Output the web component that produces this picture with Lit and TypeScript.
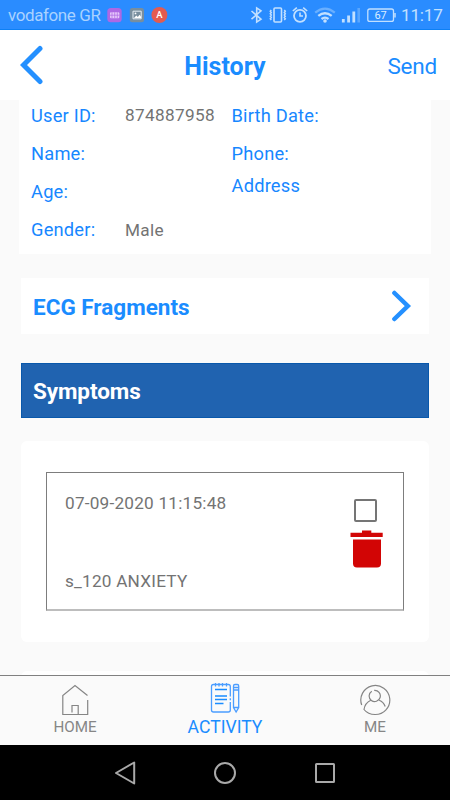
import { LitElement, html, css } from "lit";
import { customElement } from "lit/decorators.js";

@customElement("app-root")
export class AppRoot extends LitElement {
  static styles = css`
    :host { display: flex; flex-direction: column; width: 450px; height: 800px; overflow: hidden; background: #fafafa; font-family: Roboto, sans-serif; color: #737373; }
    * { box-sizing: border-box; }
    svg { display: block; flex: none; }
    .status { display: flex; align-items: center; height: 30px; flex: none; background: #2a8cff; border-bottom: 1px solid #0d80f5; color: #b9dbff; padding: 1px 8px 0 8px; }
    .carrier { font-size: 17px; width: 99px; white-space: nowrap; color: #a9d2ff; letter-spacing: -0.4px; }
    .icons { margin-right: auto; }
    .time { font-size: 17.2px; width: 41px; margin-left: 5px; white-space: nowrap; color: #c2e0ff; letter-spacing: -0.25px; }
    .header { display: grid; grid-template-columns: 100px 1fr 100px; align-items: center; height: 70px; flex: none; background: #fff; color: #1a8cff; padding: 3px 13px 0 20px; }
    .title { font-size: 25px; font-weight: 700; text-align: center; padding-right: 7px; }
    .send { font-size: 22.5px; text-align: right; letter-spacing: -0.2px; margin-top: -2px; }
    .back { margin-top: -3px; }
    .content { flex: 1; min-height: 0; overflow: hidden; }
    .user { display: flex; height: 154px; margin: 0 19px; background: #fff; padding-left: 12px; overflow: hidden; }
    .col { margin-top: -3.5px; }
    .labels { width: 94px; }
    .values { width: 106.5px; margin-top: -4px; }
    .cell { height: 38.2px; line-height: 38.2px; font-size: 18.3px; white-space: nowrap; letter-spacing: 0.2px; }
    .label { color: #1787ff; }
    .value { font-size: 17.2px; letter-spacing: 0.35px; }
    .tight { height: 26px; line-height: 26px; }
    .section { display: flex; align-items: center; justify-content: space-between; height: 56px; margin: 24px 21px 0; padding: 2px 17px 0 12px; background: #fff; color: #1a8cff; font-size: 22.5px; font-weight: 700; }
    .section svg { margin-top: -2px; }
    .active { margin-top: 28.5px; height: 55.5px; background: #2063b0; border: 1px solid #0958ab; color: #fff; padding: 2px 11px 0; letter-spacing: -0.1px; }
    .card { margin: 23px 21px 0; height: 201px; background: #fff; border-radius: 6px; padding: 31px 25px; }
    .entry { display: flex; justify-content: space-between; height: 139px; border: 1px solid #7d7d7d; border-bottom: 2px solid #bdbdbd; padding: 19px 20px 17px 18px; }
    .details { display: flex; flex-direction: column; justify-content: space-between; font-size: 17.2px; line-height: 22px; letter-spacing: 0.22px; }
    .actions { display: flex; flex-direction: column; align-items: center; padding-top: 7px; gap: 8px; }
    .check { width: 23px; height: 23px; border: 2.500px solid #757575; border-radius: 2px; margin-right: 2px; }
    .next { margin-top: 29px; }
    .tabs { display: grid; grid-template-columns: repeat(3, 150px); height: 70px; flex: none; border-top: 1px solid #808080; background: #fafafa; }
    .tab { display: flex; flex-direction: column; align-items: center; padding-top: 7px; color: #868686; font-size: 15.2px; line-height: 20px; }
    .current { color: #1a8cff; font-size: 17.6px; }
    .nav { display: flex; justify-content: center; gap: 76px; align-items: center; height: 55px; flex: none; background: #000; }
  `;

  private field(text: string, kind: string) {
    return html`<div class="cell ${kind}">${text}</div>`;
  }

  private statusLeft() {
    return html`<svg class="icons" width="62" height="16" viewBox="107 7 62 16">
      <rect x="107.3" y="8" width="14.4" height="14.2" rx="3.5" fill="#ad68e4" />
      <rect x="110" y="12.2" width="9.3" height="6" rx="1" fill="#e6c8fb" />
      <path d="M112 12.2v6M114.7 12.2v6M117.3 12.2v6M110 15.2h9.3" stroke="#ad68e4" stroke-width=".7" />
      <rect x="129.8" y="8" width="14.2" height="14.2" rx="2.5" fill="#788e9e" />
      <path d="M133 11.2h8.2v7.6H133z" fill="none" stroke="#e5edf3" stroke-width="1" />
      <path d="M134 18l2.3-2.5 1.5 1.4 1.8-2.1 1.4 2V18z" fill="#fff" /><circle cx="135.5" cy="13.4" r=".9" fill="#fff" />
      <circle cx="159.4" cy="15" r="8" fill="#e35b50" />
      <text x="159.4" y="18.4" text-anchor="middle" font-size="9.5" font-weight="500" fill="#fff">A</text>
    </svg>`;
  }

  private statusRight() {
    return html`<svg width="146" height="20" viewBox="250 5 146 20" fill="none" stroke="#c2e0ff" stroke-width="1.6">
      <path d="M251.500 11l9.500 8.200-4.300 2.900V7.900l4.300 2.900-9.500 8.400" />
      <rect x="274" y="8" width="7.500" height="14" rx="1" />
      <path d="M271.300 10l-1 1.200 1 1.200-1 1.300 1 1.300-1 1.300 1 1.300-1 1.200 1 1.200M284.300 10l1 1.200-1 1.200 1 1.300-1 1.300 1 1.300-1 1.300 1 1.200-1 1.200" stroke-width="1.500" />
      <circle cx="300" cy="15.800" r="6" stroke-width="1.800" /><path d="M300 12.400v3.600h3M292.800 11l4-3.300M307.200 11l-4-3.300" />
      <path d="M315.200 12.700q9.800-8 19.600 0" stroke="#69afff" stroke-width="2.200" />
      <path d="M318.300 15.900q6.700-5.400 13.400 0M321.500 19q3.500-2.800 7 0" stroke-width="2.300" /><circle cx="325" cy="21" r="1.800" fill="#c2e0ff" stroke="none" />
      <path d="M343.300 19v3.500M348.600 15.500v7M353.800 11.500v11" stroke-width="2.800" />
      <path d="M358.700 8v14.500" stroke="#5aa7ff" stroke-width="2.600" />
      <rect x="367.800" y="9" width="25.700" height="12.400" rx="2" stroke-width="1.300" /><path d="M395 13v4.500" stroke-width="1.500" />
      <text x="380.600" y="19.200" text-anchor="middle" font-size="11" fill="#d9ecff" stroke="none">67</text>
    </svg>`;
  }

  render() {
    return html`
      <div class="status">
        <span class="carrier">vodafone GR</span>${this.statusLeft()}${this.statusRight()}<span class="time">11:17</span>
      </div>
      <div class="header">
        <svg class="back" width="23" height="40" viewBox="0 0 23 40"><path d="M20 3.500L3.500 20 20 36.500" fill="none" stroke="#2490ff" stroke-width="5" stroke-linecap="round" /></svg>
        <div class="title">History</div>
        <div class="send">Send</div>
      </div>
      <div class="content">
        <div class="user">
          <div class="col labels">${["User ID:", "Name:", "Age:", "Gender:"].map((t) => this.field(t, "label"))}</div>
          <div class="col values">${["874887958", "", "", "Male"].map((t) => this.field(t, "value"))}</div>
          <div class="col">${this.field("Birth Date:", "label")}${this.field("Phone:", "label")}${this.field("Address", "label tight")}</div>
        </div>
        <div class="section">
          <span>ECG Fragments</span>
          <svg width="21" height="32" viewBox="0 0 21 32"><path d="M3.400 3L16.800 16 3.400 29" fill="none" stroke="#2490ff" stroke-width="4.500" stroke-linecap="round" /></svg>
        </div>
        <div class="section active"><span>Symptoms</span></div>
        <div class="card">
          <div class="entry">
            <div class="details"><span>07-09-2020 11:15:48</span><span>s_120 ANXIETY</span></div>
            <div class="actions">
              <div class="check"></div>
              <svg width="33" height="38" viewBox="0 0 33 38" fill="#d20505"><path d="M.500 2.800H12V.500h9.300v2.300h11.400v4.200H.500zM3 9.500h28v24q0 4-4 4H7q-4 0-4-4z" /></svg>
            </div>
          </div>
        </div>
        <div class="card next"></div>
      </div>
      <div class="tabs">
        <div class="tab">
          <svg width="32" height="34" viewBox="59 683 32 34" fill="none" stroke="#858585" stroke-width="1.200"><path d="M87.500 695.500L75 685.500l-12.200 10v19h24.900V700M72 712.500v-7h6.200v9" /></svg>
          <span>HOME</span>
        </div>
        <div class="tab current">
          <svg width="32" height="34" viewBox="209 683 32 34" fill="none" stroke="#4b9dff" stroke-width="1.300">
            <path d="M230.300 696.500V686.500q0-2-2-2h-14.800q-2 0-2 2v23.500q0 2 2 2h14.800q2 0 2-2V702M230.300 698.300v1.900M215.500 683v3.400M219 683v3.400M222.500 683v3.400M226.500 683v3.400" />
            <path d="M215 689.500h12M215 696h12M215 699.500h12M215 703.500h8.500" stroke="#1a8cff" />
            <path d="M233.500 707.500V686q0-1.500 1.500-1.500h2.200q1.500 0 1.500 1.500v21.500l-2.600 4.500zM233.500 687.500h5.200M233.500 690h5.200M233.500 707.500h5.200" />
          </svg>
          <span>ACTIVITY</span>
        </div>
        <div class="tab">
          <svg width="32" height="34" viewBox="359 683 32 34" fill="none" stroke="#858585" stroke-width="1.200">
            <path d="M361.700 705A14.500 14.500 0 1 1 375 714.500Q368 714.500 364 709.500Q365 703 370.800 700.300M371.800 691.200A5.600 5.600 0 1 0 374.200 690.400M379.200 700.300Q383.500 702 385.200 706.500" />
          </svg>
          <span>ME</span>
        </div>
      </div>
      <div class="nav">
        <svg width="24" height="26" viewBox="0 0 24 26" fill="none" stroke="#a9a9a9" stroke-width="2" stroke-linejoin="round"><path d="M21.200 2.500v21L3 13z" /></svg>
        <svg width="24" height="26" viewBox="0 0 24 26" fill="none" stroke="#a9a9a9" stroke-width="2"><circle cx="12" cy="13" r="10" /></svg>
        <svg width="24" height="26" viewBox="0 0 24 26" fill="none" stroke="#a9a9a9" stroke-width="2"><rect x="3" y="4" width="18" height="18" rx=".500" /></svg>
      </div>
    `;
  }
}
